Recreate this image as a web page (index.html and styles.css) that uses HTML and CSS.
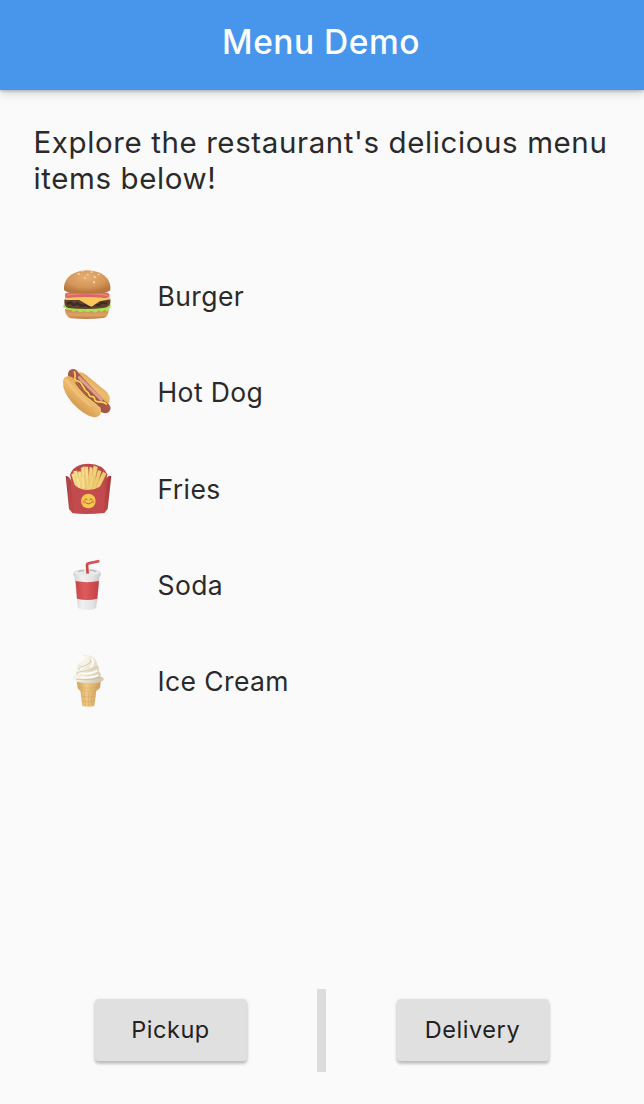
FILE: index.html
```html
<!DOCTYPE html>
<html lang="en">
<head>
<meta charset="utf-8">
<title>Menu Demo</title>
<link rel="stylesheet" href="styles.css">
</head>
<body>
<div class="screen">
  <header class="app-bar"><h1 class="title">Menu Demo</h1></header>
  <main class="content">
    <p class="intro">Explore the restaurant's delicious menu items below!</p>
    <ul class="menu">
      <li class="item">
        <svg class="icon" viewBox="0 4 210 210" aria-hidden="true">
          <defs>
            <radialGradient id="bun" cx=".48" cy=".3" r=".65"><stop offset="0" stop-color="#e7ae73"/><stop offset=".65" stop-color="#d59659"/><stop offset="1" stop-color="#b8773e"/></radialGradient>
            <linearGradient id="base" x2="0" y2="1"><stop offset="0" stop-color="#c68448"/><stop offset=".6" stop-color="#dfa368"/><stop offset="1" stop-color="#b77b46"/></linearGradient>
          </defs>
          <path d="M39 148Q104 158 170 148Q171 171 155 175Q106 181 57 176Q40 172 39 148Z" fill="url(#base)"/>
          <path d="M34 136Q105 122 177 135L175 144L169 148L166 157L158 151L147 158L141 152L131 159L119 154L107 158L96 155L84 158L74 152L64 157L56 150L45 151L41 145L34 144Z" fill="#a5e353"/>
          <path d="M38 118Q105 110 175 119Q179 140 159 144Q105 151 49 145Q33 139 38 118Z" fill="#60402e"/>
          <path d="M45 132l12-3 7 7 13-5 9 7 15-2 12 5 13-7 14 3 9-8 16 3" fill="none" stroke="#3c2b23" stroke-width="7"/>
          <path d="M38 113Q105 103 174 110L175 119L143 125L119 141L111 138L82 121L40 121Z" fill="#f9c65b"/>
          <path d="M39 104Q41 95 104 95Q169 95 173 105Q173 114 158 115Q104 109 43 115Q38 113 39 104Z" fill="#da6966"/>
          <path d="M45 106Q105 97 168 107" fill="none" stroke="#ef908b" stroke-width="3"/>
          <path d="M36 90C34 53 65 33 106 32C147 33 178 54 175 91Q171 102 106 102Q41 102 36 90Z" fill="url(#bun)"/>
          <g fill="#f4d6a5"><ellipse cx="91" cy="34" rx="4" ry="2"/><ellipse cx="119" cy="37" rx="4" ry="2"/><ellipse cx="80" cy="43" rx="4" ry="3"/><ellipse cx="107" cy="45" rx="4" ry="2"/><ellipse cx="99" cy="55" rx="2" ry="4"/><ellipse cx="128" cy="52" rx="3" ry="4"/><ellipse cx="126" cy="68" rx="3" ry="4"/><ellipse cx="140" cy="45" rx="4" ry="2"/></g>
        </svg>
        <span class="label">Burger</span>
      </li>
      <li class="item">
        <svg class="icon" viewBox="0 -2 210 210" aria-hidden="true">
          <defs>
            <linearGradient id="roll" x1=".8" y1=".1" x2=".2" y2=".9"><stop offset="0" stop-color="#c98740"/><stop offset=".45" stop-color="#efbd6e"/><stop offset="1" stop-color="#c28542"/></linearGradient>
            <linearGradient id="sausage" x1="1" x2="0" y2="1"><stop offset="0" stop-color="#c97768"/><stop offset="1" stop-color="#873a2d"/></linearGradient>
          </defs>
          <path d="M75 47Q86 38 103 52L160 99Q178 114 172 134L158 144L77 66Z" fill="url(#roll)"/>
          <path d="M48 49Q49 35 63 34Q74 34 80 46L158 130Q174 139 176 151Q174 167 158 167Q143 164 132 149L58 64Q47 59 48 49Z" fill="url(#sausage)"/>
          <path d="M82 60L148 125" stroke="#dda08f" stroke-width="9" stroke-linecap="round"/>
          <path d="M33 72Q34 59 46 56Q61 54 73 71Q91 103 125 129Q151 146 147 164Q144 179 126 179Q97 174 61 136Q31 100 33 72Z" fill="url(#roll)"/>
          <path d="M45 68Q66 106 114 142" fill="none" stroke="#f5ca84" stroke-width="8" opacity=".5" stroke-linecap="round"/>
          <path d="M71 74Q91 106 125 130Q137 138 143 146" fill="none" stroke="#95503a" stroke-width="4"/>
          <path d="M67 43C75 56 60 65 77 70C91 74 86 78 93 86C99 93 97 99 106 103C113 106 107 118 121 117C132 117 124 128 132 131C140 135 153 129 163 139" fill="none" stroke="#f4d653" stroke-width="5" stroke-linecap="round"/>
        </svg>
        <span class="label">Hot Dog</span>
      </li>
      <li class="item">
        <svg class="icon" viewBox="0 -1 210 210" aria-hidden="true">
          <defs>
            <linearGradient id="box"><stop offset="0" stop-color="#a83e41"/><stop offset=".14" stop-color="#c34b4d"/><stop offset=".84" stop-color="#c34a4c"/><stop offset="1" stop-color="#a33539"/></linearGradient>
            <linearGradient id="fry"><stop stop-color="#fbe798"/><stop offset="1" stop-color="#eec76c"/></linearGradient>
          </defs>
          <path d="M54 61Q65 29 109 28Q153 29 166 60L158 105L63 104Z" fill="#b9484b"/>
          <g stroke="#dcab58" stroke-width="1" fill="url(#fry)">
            <path d="M58 60l10-4 14 45-10 3ZM64 51l11-2 11 52-12 2ZM77 52l11-1 6 53-12 1ZM87 41l10-5 7 66-12 5ZM97 38l11-1 5 66-11 6ZM113 37l9 4-5 67-11 1ZM125 34l12 4-14 71-11-4ZM138 47l10 4-17 57-9-5ZM153 52l10 6-23 48-12-4Z"/>
            <path d="M71 72l11-2 5 30-9 4ZM86 65l10 0 5 37-10 3ZM116 59l10 3-5 43-11 1ZM132 68l9 5-12 33-9-1Z"/>
          </g>
          <path d="M41 65Q51 64 58 79Q73 106 109 107Q147 106 160 77Q168 61 178 65L167 164L157 176Q106 181 62 177L51 164Z" fill="url(#box)"/>
          <path d="M53 77L63 176M168 77L156 176" stroke="#9d3739" stroke-width="1.5" opacity=".5"/>
          <circle cx="109" cy="140" r="22" fill="#f5c950"/>
          <path d="M98 136q4-7 8 0M113 136q4-7 8 0M99 143q10 12 21 0" fill="none" stroke="#8a5929" stroke-width="2.5" stroke-linecap="round"/>
          <g fill="#ed8a4c" opacity=".8"><circle cx="96" cy="142" r="5"/><circle cx="123" cy="142" r="5"/></g>
        </svg>
        <span class="label">Fries</span>
      </li>
      <li class="item">
        <svg class="icon" viewBox="0 0 210 210" aria-hidden="true">
          <defs>
            <linearGradient id="cup"><stop stop-color="#d3d3d4"/><stop offset=".3" stop-color="#f0f0f1"/><stop offset=".7" stop-color="#e4e4e5"/><stop offset="1" stop-color="#c9c9ca"/></linearGradient>
            <linearGradient id="sleeve"><stop stop-color="#c94648"/><stop offset=".4" stop-color="#df5b5b"/><stop offset="1" stop-color="#c24143"/></linearGradient>
          </defs>
          <path d="M67 77L143 77L133 171Q130 180 105 180Q81 180 77 171Z" fill="url(#cup)"/>
          <path d="M71 93Q105 100 141 93L136 146Q105 154 75 146Z" fill="url(#sleeve)"/>
          <path d="M64 71Q65 61 83 59Q105 55 127 59Q145 61 146 71V77Q136 86 105 86Q73 86 64 77Z" fill="url(#cup)"/>
          <ellipse cx="105" cy="68" rx="37" ry="9" fill="#e9e9ea"/>
          <path d="M79 65q9-5 17-3M113 61q12-1 19 4" fill="none" stroke="#b7b7b9" stroke-width="4"/>
          <path d="M107 71L105 45Q105 41 110 40L142 33" fill="none" stroke="#cb4549" stroke-width="8" stroke-linejoin="round"/>
          <path d="M106 43L140 32" stroke="#e26666" stroke-width="3"/>
        </svg>
        <span class="label">Soda</span>
      </li>
      <li class="item">
        <svg class="icon" viewBox="0 1 210 210" aria-hidden="true">
          <defs>
            <linearGradient id="cone"><stop stop-color="#d2a25c"/><stop offset=".4" stop-color="#efc985"/><stop offset="1" stop-color="#cc9b54"/></linearGradient>
            <linearGradient id="cream" x2="1" y2=".5"><stop stop-color="#d6ccb2"/><stop offset=".4" stop-color="#f8f5eb"/><stop offset="1" stop-color="#d6cbb1"/></linearGradient>
          </defs>
          <path d="M74 103H147L144 125Q143 132 133 135L127 181Q108 186 91 181L85 135Q79 132 77 126Z" fill="url(#cone)"/>
          <path d="M78 123Q109 133 144 122M85 134Q109 141 133 134M97 140l4 41M109 140v42M121 139l-4 42M88 151q20 7 43 0M90 166q20 6 39 0" fill="none" stroke="#c08b43" stroke-width="2" opacity=".35"/>
          <path d="M93 28C123 23 136 43 136 59Q143 63 140 76Q149 84 145 93Q157 94 155 102Q148 114 110 113Q69 111 62 101Q60 93 72 87Q69 77 77 71Q72 63 79 56C91 46 109 39 93 28Z" fill="url(#cream)"/>
          <path d="M115 36Q125 55 86 64Q76 69 82 73M136 62Q123 75 84 78Q72 80 75 88M145 94Q124 105 72 101" fill="none" stroke="#bcae8b" stroke-width="2.5" opacity=".65"/>
          <path d="M118 39Q130 50 116 63M91 84Q116 86 134 76M87 95Q121 98 138 89" fill="none" stroke="#fffef9" stroke-width="5" stroke-linecap="round"/>
        </svg>
        <span class="label">Ice Cream</span>
      </li>
    </ul>
  </main>
  <footer class="actions">
    <div class="action"><button class="button">Pickup</button></div>
    <span class="divider"></span>
    <div class="action"><button class="button">Delivery</button></div>
  </footer>
</div>
</body>
</html>
```
FILE: styles.css
```css
* { box-sizing: border-box; }
body { margin: 0; background: #fafafa; color: #2a2a2a; font-family: Inter, "Liberation Sans", sans-serif; }
.screen { height: 1104px; display: flex; flex-direction: column; overflow: hidden; }
.app-bar { flex: none; height: 90px; padding-bottom: 6px; padding-right: 2px; display: flex; align-items: center; justify-content: center; background: #4796ec; box-shadow: 0 1px 3px rgba(0,0,0,.24), 0 4px 9px rgba(0,0,0,.14); }
.title { margin: 0; color: #fff; font-size: 33.5px; font-weight: 500; line-height: 40px; letter-spacing: .5px; }
.content { flex: 1; }
.intro { margin: 0; padding: 34px 30px 0 33.5px; font-size: 29.5px; line-height: 36px; letter-spacing: .6px; }
.menu { margin: 0; padding: 52px 0 0 52px; list-style: none; }
.item { height: 96.25px; display: flex; align-items: center; gap: 35.5px; }
.icon { width: 70px; height: 70px; flex: none; }
.label { font-size: 26.5px; line-height: 36px; letter-spacing: .4px; }
.actions { height: 115px; padding: 0 25px 0 24px; display: flex; align-items: flex-start; }
.action { flex: 1; display: flex; justify-content: center; padding-top: 10px; }
.divider { width: 9px; height: 83px; background: #dcdcdc; }
.button { width: 152px; height: 62px; padding: 0; border: 0; border-radius: 4px; background: #e0e0e0; color: #222; font: 400 23.5px/30px Inter, "Liberation Sans", sans-serif; letter-spacing: .55px; box-shadow: 0 3px 3px rgba(0,0,0,.19), 0 1px 4px rgba(0,0,0,.12); }
```
